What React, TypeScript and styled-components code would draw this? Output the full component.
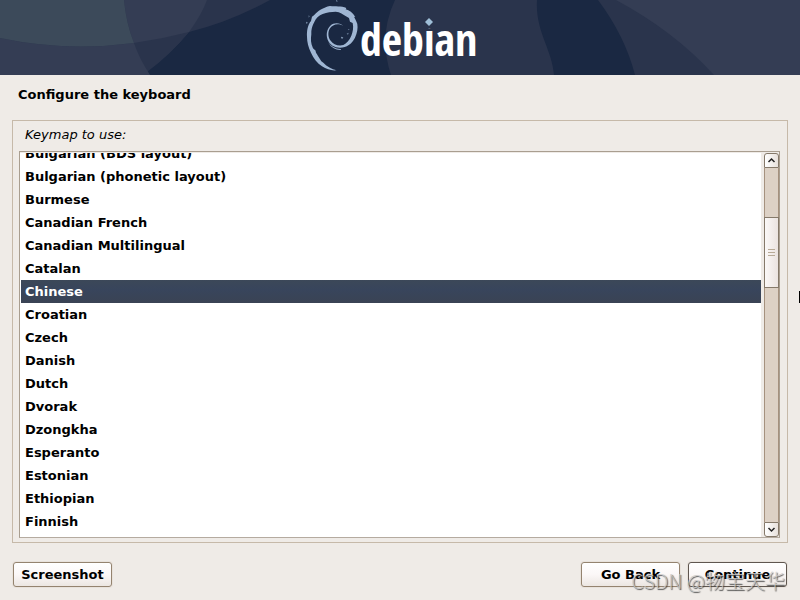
import React, { useLayoutEffect, useRef, useState } from "react";
import styled, { createGlobalStyle, css } from "styled-components";

const Global = createGlobalStyle`
  * { box-sizing: border-box; }
  body { margin: 0; background: #efebe7; }
  body, button { font: bold 13px/16px "DejaVu Sans", sans-serif; color: #000; }
`;

const Page = styled.div`
  position: relative;
  display: flex;
  flex-direction: column;
  height: 100vh;
  min-height: 320px;
  overflow: hidden;
`;

const Banner = styled.header`
  flex: none;
  height: 75px;
  background: #1a2842;
  overflow: hidden;
  svg { display: block; width: 100%; height: 100%; }
`;

const Title = styled.h1`
  flex: none;
  margin: 0;
  padding: 12px 18px 17px;
  font-size: 13px;
  line-height: 16px;
`;

const Frame = styled.main`
  flex: 1;
  min-height: 0;
  display: flex;
  flex-direction: column;
  margin: 0 12px;
  padding: 6px 7px 4px 6px;
  border: 1px solid #c6b9a9;
`;

const Caption = styled.div`
  padding: 0 6px;
  margin-bottom: 8px;
  font-weight: normal;
  font-style: italic;
`;

const ListPane = styled.div`
  flex: 1;
  min-height: 0;
  display: flex;
  background: #efebe7;
  border: 1px solid #a99e90;
  border-bottom-color: #b5aba0;
  padding-top: 1px;
`;

const Options = styled.ul`
  flex: 1;
  margin: 0;
  padding: 0 0 0 1px;
  list-style: none;
  background: #fff;
  overflow-y: auto;
  scrollbar-width: none;
`;

const Option = styled.li<{ $selected: boolean }>`
  height: 23px;
  padding: 0 4px;
  line-height: 23px;
  cursor: default;
  ${(p) => p.$selected && css`
    color: #fff;
    background: linear-gradient(#3c4858, #38455c 40%, #3a4354);
  `}
`;

const Scrollbar = styled.div`
  flex: none;
  width: 15px;
  margin-left: 3px;
  display: flex;
  flex-direction: column;
`;

const ScrollButton = styled.button<{ $down?: boolean }>`
  height: 15px;
  padding: 0;
  display: grid;
  place-items: center;
  border: 1px solid #85796a;
  border-radius: ${(p) => (p.$down ? "0 0 3px 3px" : "3px 3px 0 0")};
  background: linear-gradient(90deg, #fff, #e8e1dc);
`;

const Trough = styled.div`
  flex: 1;
  display: flex;
  flex-direction: column;
  background: #ddd1c5;
  border: solid #a5917e;
  border-width: 0 1px;
`;

const Before = styled.div`flex: 49;`;
const After = styled.div`flex: 234;`;

const Thumb = styled.div`
  height: 71px;
  margin: 0 -1px;
  border: 1px solid #85796a;
  background: linear-gradient(90deg, #fbf8f7, #ebe3e0);
  display: flex;
  flex-direction: column;
  align-items: center;
  justify-content: center;
  gap: 2px;
`;

const Grip = styled.i`
  width: 7px;
  height: 1px;
  background: #b8aa97;
`;

const Footer = styled.footer`
  flex: none;
  display: flex;
  gap: 8px;
  padding: 19px 13px 13px;
`;

const Action = styled.button<{ $primary?: boolean }>`
  width: 99px;
  height: 25px;
  padding: 0;
  border: 1px solid ${(p) => (p.$primary ? "#5f564f" : "#94836f")};
  border-radius: 3px;
  background: linear-gradient(#fff, #fbf7f7 50%, #ece6e2);
  box-shadow: 0 0 0 1px #e8e2dc;
`;

const Spacer = styled.div`flex: 1;`;

const Watermark = styled.div`
  position: absolute;
  right: 15px;
  bottom: 6px;
  font: 300 20px/26px "Noto Sans CJK SC", sans-serif;
  color: rgba(205, 203, 201, 0.85);
  text-shadow: 1px 1px 1px rgba(60, 60, 60, 0.85);
  white-space: nowrap;
  pointer-events: none;
`;

const Pointer = styled.div`
  position: absolute;
  top: 291px;
  right: 0;
  width: 1px;
  height: 12px;
  background: #000;
`;

const keymaps = [
  "Bulgarian (BDS layout)", "Bulgarian (phonetic layout)", "Burmese", "Canadian French",
  "Canadian Multilingual", "Catalan", "Chinese", "Croatian", "Czech", "Danish", "Dutch",
  "Dvorak", "Dzongkha", "Esperanto", "Estonian", "Ethiopian", "Finnish", "French",
];

function DebianBanner() {
  return (
    <svg viewBox="0 0 800 75" preserveAspectRatio="xMidYMid slice" role="img" aria-label="debian">
      <g fill="#2a344c">
        <path d="M0 0H270Q230 22 189 32Q172 53 142 75H0Z" />
        <path d="M134 43L189 32Q170 55 147 72L150 75H142Z" />
        <path d="M395 0Q378 36 391 75H554C552 49 535 31 537 0Z" />
        <path d="M598 0Q625 36 635 75H800V0Z" />
      </g>
      <g fill="#343d54">
        <path d="M124 0H207Q202 14 189 32Q162 39 134 43Q126 23 124 0Z" />
        <path d="M0 38Q66 52 134 43Q139 58 150 75H0Z" />
        <path d="M616 0Q674 31 714 75H800V0Z" />
      </g>
      <path d="M0 0H124Q126 23 134 43Q66 52 0 38Z" fill="#3c4a5a" />
      <g fill="#9fb6d3" transform="translate(302 0) scale(0.3333)">
        <path d="M125 79C115 68 96 67 85 77C74 88 72 104 77 119C83 135 98 143 114 143C134 143 149 132 159 113C166 99 168 84 166 72C163 63 160 58 156 50L160 51C152 37 142 31 131 28L133 24C118 17 100 20 84 18C64 22 47 33 36 46L30 50L27 63C17 75 14 93 15 110C15 126 19 142 27 158C34 175 46 189 60 199C74 208 89 213 104 211C89 207 75 200 64 188L58 184L48 168C45 161 40 158 41 152L33 145C26 130 26 117 28 103C27 89 31 77 37 66C42 54 51 46 62 42C75 36 88 36 101 35C114 36 124 43 132 49L141 54L144 65L152 69C155 82 153 95 148 107C142 121 134 130 124 135C108 139 94 133 86 122C78 112 77 97 83 86C92 73 110 68 125 79Z" />
        <path d="M78 126Q93 148 117 147L116 150Q91 150 78 126Z" />
        <path d="M103 0l4 3-2 3-3-4zM20 46l3 3-3 4zM13 65l4 2-2 5-3-3zM117 110l7 2-2 4-5-1zM134 101l6-3-2 6zM138 87l4 0-1 4z" opacity="0.7" />
      </g>
      <text x="360" y="56" fill="#fff" fontSize="44" fontWeight="700" fontFamily="Open Sans Condensed, sans-serif">debian</text>
      <rect x="424" y="18" width="14" height="10" fill="#2a344c" />
      <path d="M429 18L433 22L429 26L425 22Z" fill="#9fbfd8" />
    </svg>
  );
}

export default function App() {
  const [selected, setSelected] = useState("Chinese");
  const list = useRef<HTMLUListElement>(null);
  useLayoutEffect(() => {
    if (list.current) list.current.scrollTop = 11;
  }, []);
  const scroll = (amount: number) => list.current?.scrollBy({ top: amount });

  return (
    <Page>
      <Global />
      <Banner><DebianBanner /></Banner>
      <Title>Configure the keyboard</Title>
      <Frame>
        <Caption id="keymap-label">Keymap to use:</Caption>
        <ListPane>
          <Options ref={list} role="listbox" aria-labelledby="keymap-label" tabIndex={0}>
            {keymaps.map((name) => (
              <Option key={name} role="option" aria-selected={name === selected}
                $selected={name === selected} onClick={() => setSelected(name)}>
                {name}
              </Option>
            ))}
          </Options>
          <Scrollbar>
            <ScrollButton aria-label="Scroll up" onClick={() => scroll(-23)}>
              <svg width="9" height="7" fill="none" stroke="#222" strokeWidth="1.5"><path d="M1.5 5L4.5 2L7.5 5" /></svg>
            </ScrollButton>
            <Trough>
              <Before />
              <Thumb><Grip /><Grip /><Grip /></Thumb>
              <After />
            </Trough>
            <ScrollButton $down aria-label="Scroll down" onClick={() => scroll(23)}>
              <svg width="9" height="7" fill="none" stroke="#222" strokeWidth="1.5"><path d="M1.5 2L4.5 5L7.5 2" /></svg>
            </ScrollButton>
          </Scrollbar>
        </ListPane>
      </Frame>
      <Footer>
        <Action>Screenshot</Action>
        <Spacer />
        <Action>Go Back</Action>
        <Action $primary>Continue</Action>
      </Footer>
      <Watermark>CSDN @物宝天华</Watermark>
      <Pointer />
    </Page>
  );
}
